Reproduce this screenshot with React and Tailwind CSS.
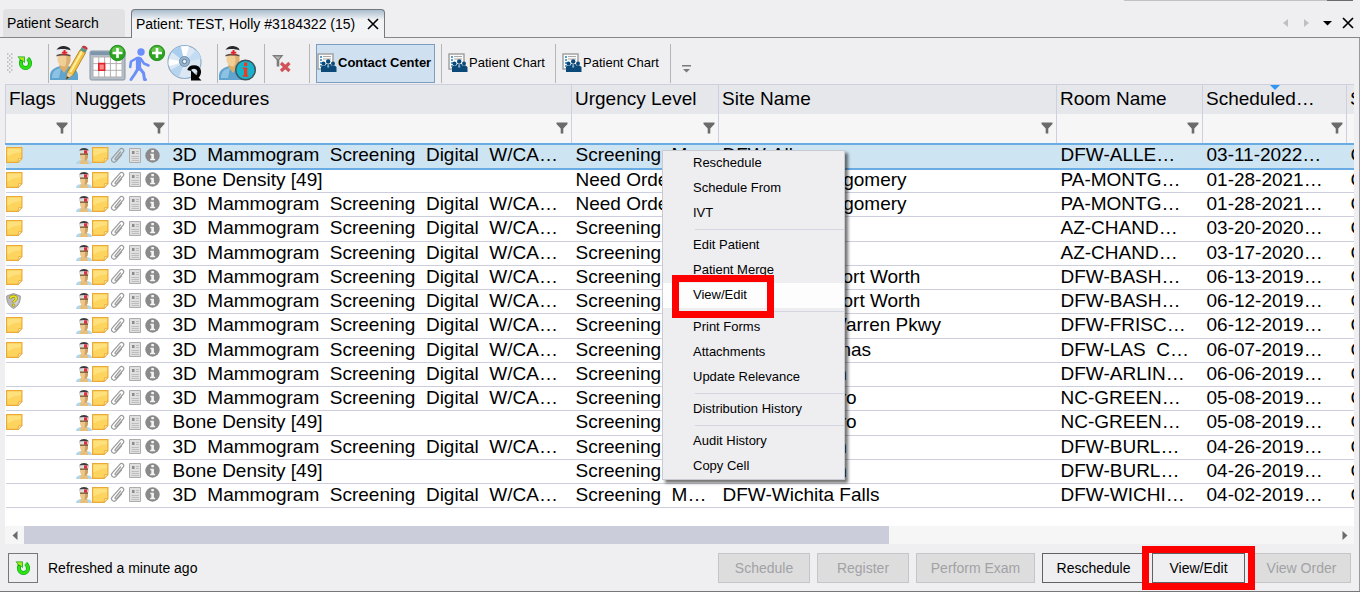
import { useState } from "react";

const PROC = "3D  Mammogram  Screening  Digital  W/CA…";
const BONE = "Bone Density [49]";
const SCREEN = "Screening  M…";

const rows = [
  { flag: "note", proc: PROC, urgency: SCREEN, site: "DFW-Allen", room: "DFW-ALLE…", date: "03-11-2022…" },
  { flag: "note", proc: BONE, urgency: "Need Order", site: "PA-West Montgomery", room: "PA-MONTG…", date: "01-28-2021…" },
  { flag: "note", proc: PROC, urgency: "Need Order", site: "PA-West Montgomery", room: "PA-MONTG…", date: "01-28-2021…" },
  { flag: "note", proc: PROC, urgency: SCREEN, site: "AZ-Chandler", room: "AZ-CHAND…", date: "03-20-2020…" },
  { flag: "note", proc: PROC, urgency: SCREEN, site: "AZ-Chandler", room: "AZ-CHAND…", date: "03-17-2020…" },
  { flag: "note", proc: PROC, urgency: SCREEN, site: "DFW-Basha Fort Worth", room: "DFW-BASH…", date: "06-13-2019…" },
  { flag: "shield", proc: PROC, urgency: SCREEN, site: "DFW-Basha Fort Worth", room: "DFW-BASH…", date: "06-12-2019…" },
  { flag: "note", proc: PROC, urgency: SCREEN, site: "DFW-Frisco Warren Pkwy", room: "DFW-FRISC…", date: "06-12-2019…" },
  { flag: "note", proc: PROC, urgency: SCREEN, site: "DFW-Las Colinas", room: "DFW-LAS  C…", date: "06-07-2019…" },
  { flag: null, proc: PROC, urgency: SCREEN, site: "DFW-Arlington", room: "DFW-ARLIN…", date: "06-06-2019…" },
  { flag: "note", proc: PROC, urgency: SCREEN, site: "NC-Greensboro", room: "NC-GREEN…", date: "05-08-2019…" },
  { flag: "note", proc: BONE, urgency: SCREEN, site: "NC-Greensboro", room: "NC-GREEN…", date: "05-08-2019…" },
  { flag: null, proc: PROC, urgency: SCREEN, site: "DFW-Burleson", room: "DFW-BURL…", date: "04-26-2019…" },
  { flag: null, proc: BONE, urgency: SCREEN, site: "DFW-Burleson", room: "DFW-BURL…", date: "04-26-2019…" },
  { flag: null, proc: PROC, urgency: SCREEN, site: "DFW-Wichita Falls", room: "DFW-WICHI…", date: "04-02-2019…" },
];

const columns = [
  { name: "Flags", width: "w-[66px]" },
  { name: "Nuggets", width: "w-[97px]" },
  { name: "Procedures", width: "w-[403px]" },
  { name: "Urgency Level", width: "w-[147px]" },
  { name: "Site Name", width: "w-[338px]" },
  { name: "Room Name", width: "w-[146px]" },
  { name: "Scheduled…", width: "w-[144px]", sorted: true },
  { name: "Status", width: "w-[140px]" },
];

const menuGroups = [
  ["Reschedule", "Schedule From", "IVT"],
  ["Edit Patient", "Patient Merge", "View/Edit"],
  ["Print Forms", "Attachments", "Update Relevance"],
  ["Distribution History"],
  ["Audit History", "Copy Cell"],
];

function RefreshIcon() {
  return (
    <svg width="17" height="16" viewBox="0 0 17 16">
      <path d="M4 6v2.500a4.500 4.500 0 0 0 9 0c0-2-.6-3.600-2.300-5" fill="none" stroke="#0a9f14" strokeWidth="4" />
      <path d="M.5 1.500h7.300V8L6 6.500H2.500V4z" fill="#0a9f14" />
      <path d="M4 6v2.500a4.500 4.500 0 0 0 9 0c0-2-.6-3.600-2.300-5" fill="none" stroke="#2ce312" strokeWidth="2.800" />
      <path d="M1.500 2.200h5.500v4.600L5.500 5.500 3.500 4.500z" fill="#a4ee1c" />
    </svg>
  );
}

function NursePerson() {
  return (
    <g>
      <path d="M0 34v-4c0-6 4-8 10-10h8c6 2 10 4 10 10v4z" fill="#5fa4cf" />
      <path d="M2 32c0-7 4-9 9-10l-2 10z" fill="#8cc3e4" />
      <path d="M9.500 16h9v5l-4.500 6-4.500-6z" fill="#dcae68" />
      <ellipse cx="14" cy="13" rx="6.600" ry="7.600" fill="#f0cf96" />
      <path d="M15 6c4 1 6 4 5.500 8-.5 4-2 6-5.500 6.500 2-4 2-9 0-14.500z" fill="#dcae70" />
      <path d="M6.500 4C8 1 12-.5 15 .2c4 .6 6 2.600 5.500 5.300z" fill="#28282c" />
      <path d="M6 4c4-1.500 10-1.500 15 .5v4.500c-5-2-11-2-15 0z" fill="#e9edf1" />
      <path d="M6.500 9c4-1.600 9-1.600 14 0v1.600c-4-1.400-10-1.400-14 0z" fill="#5d4d48" />
      <path d="M13.500 4h2v1.800h1.800v1.800h-1.800v1.600h-2V7.600h-1.600V5.800h1.600z" fill="#e3202a" />
    </g>
  );
}

function EditPatientIcon() {
  return (
    <svg width="38" height="36" viewBox="0 0 38 36">
      <g transform="translate(0 1)">
        <NursePerson />
      </g>
      <path d="M16 34.500l1.800-8L30 5l5.500 2.800L23 30z" fill="#f5c542" stroke="#a87516" strokeWidth=".8" />
      <path d="M20.500 27 32 6.500" stroke="#ffefa0" strokeWidth="2" />
      <path d="M16 34.500l1.600-7 5 2.600z" fill="#e9cfa0" />
      <path d="M16 34.500l.8-3.200 2.300 1.300z" fill="#33302c" />
      <path d="m30 5 1.600-2.700 5.400 2.700-1.500 2.800z" fill="#5c9580" />
      <path d="m31.600 2.300.9-1.400c1.700-.9 5.300.9 5.100 2.800l-.6 1.300z" fill="#c43444" />
    </svg>
  );
}

function PlusBadge({ x, y }) {
  return (
    <g transform={`translate(${x} ${y})`}>
      <circle r="7.700" fill="#2ba51d" stroke="#18831a" strokeWidth=".8" />
      <path d="M-6-2a6.300 6.300 0 0 1 12 0C2-.5-2-.5-6-2z" fill="#73cf58" opacity=".7" />
      <path d="M-1.300-5h2.600v3.700H5v2.600H1.300V5h-2.600V1.300H-5v-2.600h3.700z" fill="#fff" />
    </g>
  );
}

function CalendarAddIcon() {
  return (
    <svg width="38" height="38" viewBox="0 0 38 38">
      <rect x="1" y="7" width="35" height="29" rx="1.500" fill="#b4bec8" stroke="#8796a3" />
      <path d="M1.500 7.500h34v3.500h-34z" fill="#7d95ab" />
      <path d="M4 13h29v20H4z" fill="#fff" />
      <path d="M4 13h29v20H4zM9.800 13v20M15.600 13v20M21.400 13v20M27.200 13v20M4 19.600h29M4 26.300h29" fill="none" stroke="#b3afaf" />
      <path d="M9.800 19.600h5.800v6.700H9.800z" fill="#ff8c8c" stroke="#e3222b" strokeWidth="1.600" />
      <PlusBadge x={28.500} y={9} />
    </svg>
  );
}

function WalkAddIcon() {
  return (
    <svg width="38" height="38" viewBox="0 0 38 38">
      <circle cx="13" cy="8" r="3.700" fill="#6b8ff8" />
      <g fill="none" stroke="#6b8ff8" strokeLinecap="round" strokeLinejoin="round">
        <path d="M10.500 15v9" strokeWidth="5.200" />
        <path d="M9 14l-6 3.500-.8 5.500" strokeWidth="2.600" />
        <path d="M12.500 14.500l3.500 5 4.500 2" strokeWidth="2.600" />
        <path d="M9.800 25l-3 5L3 35.500" strokeWidth="3" />
        <path d="M11.500 24l4 5 1 6.500h1" strokeWidth="3" />
      </g>
      <PlusBadge x={29} y={9} />
    </svg>
  );
}

function DiscIcon() {
  return (
    <svg width="38" height="38" viewBox="0 0 38 38">
      <circle cx="17.500" cy="18" r="16.500" fill="#dbe8f4" stroke="#8faecb" strokeWidth="1.200" />
      <path d="M17.500 18 5 8a16 16 0 0 1 9-5.500z" fill="#a8cdee" />
      <path d="M17.500 18 14 2.500a16 16 0 0 1 8 0z" fill="#fff" />
      <path d="M17.500 18 29 6a16 16 0 0 1 5 9z" fill="#c3dcf3" />
      <path d="M17.500 18 4 26a16 16 0 0 0 8 7z" fill="#b7d4ef" />
      <path d="M17.500 18 2 15a16 16 0 0 0 0 7z" fill="#fff" />
      <circle cx="17.500" cy="17.500" r="5" fill="#9ab5cc" stroke="#6d90af" />
      <circle cx="17.500" cy="17.500" r="2.200" fill="#e8f0f7" stroke="#55799b" />
      <path d="M22 26.500c1-4.500 9-5 10.200.5.500 2.500-.8 4.500-2.700 6.500" fill="none" stroke="#050505" strokeWidth="3.600" />
      <path d="M24 26v10.500h10.500z" fill="#050505" />
    </svg>
  );
}

function PatientInfoIcon() {
  return (
    <svg width="38" height="36" viewBox="0 0 38 36">
      <g transform="translate(0 1)">
        <NursePerson />
      </g>
      <circle cx="26.500" cy="25" r="9.800" fill="#16b3cb" stroke="#3c5660" strokeWidth="1.500" />
      <path d="M25 17.500h3.200V21H25zM23.800 22.500h4.400v7.800h1.200v1.500h-5.600v-1.500H25V24h-1.200z" fill="#f0391d" />
    </svg>
  );
}

function ClearFilterIcon() {
  return (
    <svg width="20" height="20" viewBox="0 0 20 20">
      <path d="M1 2h11.500L8.300 7v6.500H5.700V7z" fill="#7b7b7b" />
      <path d="M3.500 3.500h6l-2.300 3z" fill="#b9b9b9" />
      <path d="m10 10 8.500 8M18.500 10 10 18" stroke="#cf5358" strokeWidth="3.200" />
    </svg>
  );
}

function ChartIcon() {
  return (
    <svg width="20" height="20" viewBox="0 0 20 20">
      <path d="M1 1h15v15H1z" fill="#fbfbfb" stroke="#a3a3a3" strokeWidth="1.500" />
      <path d="M3 4h2M3 7h2M3 10h2M3 13h2" stroke="#2781b5" strokeWidth="1.500" />
      <path d="M6 3.500h8M6 6h8" stroke="#a8a8a8" />
      <g fill="#0b4a78">
        <circle cx="6.500" cy="10.500" r="2" />
        <circle cx="16" cy="10.500" r="2" />
        <circle cx="11.200" cy="8.500" r="2.200" />
        <path d="M4 19v-5l1.500-1.500h2.700l1-1.500h4.200l1 1.500h3.200L19.500 14v5z" />
      </g>
      <path d="M10.600 11h1.200l.6 3-1.200 1-1.200-1z" fill="#7ca9c8" />
    </svg>
  );
}

function FunnelIcon() {
  return (
    <svg width="12" height="12" viewBox="0 0 12 12">
      <path d="M.5.500h11v1.600L7.300 6.500v5H4.700v-5L.5 2.100z" fill="#6b6b6b" />
    </svg>
  );
}

function NoteIcon() {
  return (
    <svg width="17" height="16" viewBox="0 0 17 16">
      <path d="M.6.600h15.300v11L12 15.400H.6z" fill="#fcd45e" stroke="#eba93a" strokeWidth="1.200" />
      <path d="M1.300 1.600h13.800v4c-6-1-10 2-13.800 4z" fill="#fee07c" />
      <path d="M15.900 11.600 12 15.400l.6-3.800z" fill="#fff3bd" stroke="#e9a637" strokeWidth=".8" />
    </svg>
  );
}

function ShieldIcon() {
  return (
    <svg width="15" height="16" viewBox="0 0 15 16">
      <path d="M7.500.500 14.300 3c.2 6-2 10-6.800 12.500C2.700 13 .5 9 .7 3z" fill="#b9b9b9" stroke="#9a9a9a" />
      <path d="M7.500 2 13 4c0 5-1.500 8-5.500 10z" fill="#cfcfcf" />
      <path d="M4.500 5.500c.3-3 5.800-3 5.800 0 0 2-2.600 2-2.600 4" fill="none" stroke="#77741a" strokeWidth="2.800" />
      <path d="M4.500 5.500c.3-3 5.800-3 5.800 0 0 2-2.600 2-2.600 4" fill="none" stroke="#e8e01e" strokeWidth="1.900" />
      <circle cx="7.600" cy="12.200" r="1.300" fill="#e8e01e" stroke="#77741a" strokeWidth=".5" />
    </svg>
  );
}

function NuggetIcons() {
  return (
    <div className="flex items-center">
      <svg width="16" height="17" viewBox="0 0 16 17">
        <path d="M0 17c0-2.600 2-3.600 5-4h6c3 .4 5 1.400 5 4z" fill="#b4d6ea" />
        <path d="M3.500 17l2-5h5l2 5z" fill="#e7bf7c" />
        <path d="M4 6h8v3c0 3-2 5-4 5s-4-2-4-5z" fill="#ecc78b" />
        <path d="M9.500 6H12v3c0 3-1.500 4.500-3.500 5z" fill="#cf9f62" />
        <path d="M3.500 3C5 .3 11 .3 12.500 3v2h-9z" fill="#3b3b3d" />
        <path d="M3 3.600c3-.8 7-.8 10 0v2.800c-3-1-7-1-10 0z" fill="#dcdcde" />
        <path d="M8 3.300h3.200v3.400H8z" fill="#dd3038" />
        <path d="M4 6.600h8v1.200H4z" fill="#6d5541" />
      </svg>
      <NoteIcon />
      <svg width="17" height="17" viewBox="0 0 17 17" fill="none" stroke="#9a9a9a" strokeWidth="1.200" strokeLinecap="round">
        <path d="M11.500 5 6.300 11.300c-.9 1.200.5 2.300 1.500 1.200l6.300-7.400c2-2.600-1.200-4.900-3.300-2.700L3.300 10.800c-2.300 3 1.300 6 3.900 3.300L12.500 8" />
      </svg>
      <svg width="18" height="17" viewBox="0 0 18 17">
        <path d="M3.500 1.500h11v14h-11z" fill="#e0e0e0" stroke="#adadad" />
        <path d="M6 4h2.500v3H6z" fill="#8c8c8c" />
        <path d="M10 4.500h3M10 6.500h3M5.500 9.500h7.500M5.500 11.500h7.500M5.500 13.500h7.500" stroke="#bdbdbd" />
      </svg>
      <svg width="17" height="17" viewBox="0 0 17 17">
        <circle cx="8.500" cy="8.500" r="7.200" fill="#8a8a8a" />
        <path d="M7.300 3h2.600v2.300H7.300zM6.300 6.700h3.600v5h1.200v1.600H6.100v-1.600h1.200V8.300h-1z" fill="#f4f4f4" />
      </svg>
    </div>
  );
}

function ToolbarButton({ label, children }) {
  return (
    <button type="button" aria-label={label} className="flex h-10 items-center">
      {children}
    </button>
  );
}

function Divider() {
  return <div className="h-[39px] w-px shrink-0 bg-[#b4b5b9]" />;
}

function ContextMenu() {
  return (
    <div
      role="menu"
      className="absolute top-[66px] left-[657px] w-[183px] border border-[#c9cad2] bg-[#eeeef1] text-[13px] shadow-[3px_3px_3px_rgba(0,0,0,0.55)]"
    >
      {menuGroups.map((group, i) => (
        <div key={i}>
          {i > 0 && (
            <div className="flex h-[7px] items-center pl-8">
              <div className="h-px w-full bg-[#d5d6e2]" />
            </div>
          )}
          {group.map((item) => (
            <div key={item} className={item === "View/Edit" ? "relative bg-[#fdfdfd]" : ""}>
              <button type="button" role="menuitem" className="block h-[25px] w-full pl-[30px] text-left">
                {item}
              </button>
              {item === "View/Edit" && (
                <div className="pointer-events-none absolute -top-2 left-[9px] h-[43px] w-[102px] border-[7px] border-[#ff0000]" />
              )}
            </div>
          ))}
        </div>
      ))}
    </div>
  );
}

function StudyTable({ selected, onSelect }) {
  return (
    <table className="w-[1481px] table-fixed border-collapse text-[19px] leading-5">
      <colgroup>
        {columns.map((c) => (
          <col key={c.name} className={c.width} />
        ))}
      </colgroup>
      <thead>
        <tr className="h-[29px] border-t border-[#cfd0df] bg-[#e6e7eb]">
          {columns.map((c) => (
            <th key={c.name} scope="col" className="relative border-x border-[#cfd0df] pr-1 pl-[3px] text-left font-normal whitespace-nowrap">
              {c.name}
              {c.sorted && (
                <svg className="absolute top-0 left-[67px]" width="10" height="5" viewBox="0 0 10 5">
                  <path d="M0 0h10L5 5z" fill="#2f96f3" />
                </svg>
              )}
            </th>
          ))}
        </tr>
        <tr className="h-[30px] border-b-2 border-[#69abe3] bg-[#f6f6f6]">
          {columns.map((c) => (
            <td key={c.name} className="border-x border-x-[#cfd0df] pr-[3px]">
              <button type="button" aria-label={`Filter ${c.name}`} className="ml-auto block">
                <FunnelIcon />
              </button>
            </td>
          ))}
        </tr>
      </thead>
      <tbody className="[&_td]:pt-0 [&_td]:pr-0 [&_td]:pb-[2px]">
        {rows.map((row, i) => (
          <tr
            key={i}
            onClick={() => onSelect(i)}
            className={
              i === selected
                ? "h-[25px] border-b-2 border-[#69abe3] bg-[#cde4f2] whitespace-pre"
                : "h-6 border-b border-[#cccddd] bg-white whitespace-pre nth-[4n]:h-[25px]"
            }
          >
            <td className="pl-0">
              {row.flag === "note" && <NoteIcon />}
              {row.flag === "shield" && <ShieldIcon />}
            </td>
            <td className="pl-1">
              <NuggetIcons />
            </td>
            <td className="pl-1">{row.proc}</td>
            <td className="overflow-hidden pl-1">{row.urgency}</td>
            <td className="pl-1">{row.site}</td>
            <td className="pl-1">{row.room}</td>
            <td className="pl-1">{row.date}</td>
            <td className="pl-1">Completed</td>
          </tr>
        ))}
      </tbody>
    </table>
  );
}

function ActionButton({ children, disabled, className = "w-[92px]" }) {
  return (
    <button
      type="button"
      disabled={disabled}
      className={`h-[30px] border border-[#606065] bg-[#efeff1] disabled:border-[#c5c5c7] disabled:bg-[#dddddd] disabled:text-[#a2a2a5] ${className}`}
    >
      {children}
    </button>
  );
}

export default function App() {
  const [selected, setSelected] = useState(0);

  return (
    <div className="flex min-h-screen flex-col overflow-hidden border-b border-[#77777b] bg-[#efeff1] font-['Liberation_Sans',Arial,sans-serif] text-sm text-black">
      {/* Sliver of the window frame above the tabs */}
      <div className="flex h-px justify-end pr-[7px]">
        <div className="w-[203px] bg-[#c2c2c4]" />
        <div className="w-[26px] bg-[#6c6c70]" />
      </div>

      <div className="flex h-[37px] items-end">
        <div className="flex h-full items-end border-b border-[#85868b] pr-[6px] pl-[3px]">
          <button type="button" className="h-7 w-[122px] rounded-t bg-[#e1e1e3] pl-1 text-left">
            Patient Search
          </button>
        </div>
        <div className="z-10 flex h-[29px] w-[254px] items-center justify-between rounded-t border border-b-0 border-[#77787e] bg-linear-to-b from-[#a9bdcd] from-0% to-[#f2f3f5] to-35% pr-[5px] pl-1">
          <button type="button" className="whitespace-nowrap">
            Patient: TEST, Holly #3184322 (15)
          </button>
          <button type="button" aria-label="Close tab">
            <svg width="12" height="12" viewBox="0 0 12 12" stroke="#000" strokeWidth="1.600">
              <path d="m1 1 10 10M11 1 1 11" />
            </svg>
          </button>
        </div>
        <div className="flex h-full flex-1 items-center justify-end gap-[14px] border-b border-[#85868b] pt-2 pr-[6px]">
          <button type="button" aria-label="Previous tab">
            <svg width="6" height="8" viewBox="0 0 6 8">
              <path d="M5 0v8L0 4z" fill="#bfc0c3" />
            </svg>
          </button>
          <button type="button" aria-label="Next tab">
            <svg width="6" height="8" viewBox="0 0 6 8">
              <path d="M1 0v8l5-4z" fill="#bfc0c3" />
            </svg>
          </button>
          <div className="flex items-center gap-[10px]">
            <button type="button" aria-label="Tab list">
              <svg width="9" height="6" viewBox="0 0 9 6">
                <path d="M0 1h9L4.500 5.500z" fill="#000" />
              </svg>
            </button>
            <button type="button" aria-label="Close">
              <svg width="12" height="12" viewBox="0 0 12 12" stroke="#000" strokeWidth="1.700">
                <path d="m1 1 10 10M11 1 1 11" />
              </svg>
            </button>
          </div>
        </div>
      </div>

      <div className="flex flex-1 flex-col border-r border-[#98999e]">
        <div className="flex h-[46px] items-center overflow-hidden pt-1 pl-[7px] text-[13px]">
          <svg className="shrink-0" width="7" height="20" viewBox="0 0 7 20">
            {[0, 4, 8, 12, 16].map((y) => (
              <path key={y} d={`M0 ${y + 1}h1.500M4 ${y + 1}h1.500M2 ${y + 3}h1.500`} stroke="#b8b8bb" strokeWidth="1.500" />
            ))}
          </svg>
          <div className="mr-[14px] ml-[3px]">
            <ToolbarButton label="Refresh">
              <RefreshIcon />
            </ToolbarButton>
          </div>
          <Divider />
          <div className="mx-px flex gap-px pr-[11px]">
            <ToolbarButton label="Edit patient">
              <EditPatientIcon />
            </ToolbarButton>
            <ToolbarButton label="Add appointment">
              <CalendarAddIcon />
            </ToolbarButton>
            <ToolbarButton label="Add walk-in">
              <WalkAddIcon />
            </ToolbarButton>
            <ToolbarButton label="Import disc">
              <DiscIcon />
            </ToolbarButton>
          </div>
          <Divider />
          <div className="mr-[7px] ml-px">
            <ToolbarButton label="Patient information">
              <PatientInfoIcon />
            </ToolbarButton>
          </div>
          <Divider />
          <div className="mr-[18px] ml-[6px]">
            <ToolbarButton label="Clear filters">
              <ClearFilterIcon />
            </ToolbarButton>
          </div>
          <Divider />
          <button type="button" className="mx-[6px] flex h-[39px] w-[119px] shrink-0 items-center gap-px border border-[#7d9dbf] bg-[#cfe0f1] font-bold whitespace-nowrap">
            <ChartIcon />
            Contact Center
          </button>
          <Divider />
          <button type="button" className="flex h-[39px] w-[113px] shrink-0 items-center gap-px pl-[6px] whitespace-nowrap">
            <ChartIcon />
            Patient Chart
          </button>
          <Divider />
          <button type="button" className="flex h-[39px] w-[114px] shrink-0 items-center gap-px pl-[6px] whitespace-nowrap">
            <ChartIcon />
            Patient Chart
          </button>
          <Divider />
          <button type="button" aria-label="Toolbar options" className="mt-3 ml-[11px]">
            <svg width="9" height="8" viewBox="0 0 9 8">
              <path d="M0 0h9v1.500H0zM1 4h7L4.500 7.500z" fill="#7b7b7e" />
            </svg>
          </button>
        </div>

        <div className="relative mr-[5px] ml-[5px] flex flex-1 flex-col bg-white">
          <div className="flex-1 overflow-hidden">
            <StudyTable selected={selected} onSelect={setSelected} />
          </div>
          <div className="flex h-[18px] items-center bg-[#f6f6f6]">
            <button type="button" aria-label="Scroll left" className="flex w-[19px] justify-center">
              <svg width="6" height="9" viewBox="0 0 6 9">
                <path d="M5.500 0v9L.5 4.500z" fill="#6b6b6e" />
              </svg>
            </button>
            <div className="flex-1">
              <div className="h-[18px] w-[66%] bg-[#cccddb]" />
            </div>
            <button type="button" aria-label="Scroll right" className="flex w-[19px] justify-center">
              <svg width="6" height="9" viewBox="0 0 6 9">
                <path d="M.5 0v9l5-4.500z" fill="#6b6b6e" />
              </svg>
            </button>
          </div>
          <ContextMenu />
        </div>

        <div className="flex h-[47px] items-center pr-2 pl-2">
          <button type="button" aria-label="Refresh list" className="flex size-[30px] items-center justify-center border border-[#77777b]">
            <RefreshIcon />
          </button>
          <span className="ml-[10px]">Refreshed a minute ago</span>
          <div className="ml-auto flex gap-[7px]">
            <ActionButton disabled>Schedule</ActionButton>
            <ActionButton disabled>Register</ActionButton>
            <ActionButton disabled className="w-[119px]">
              Perform Exam
            </ActionButton>
            <ActionButton className="w-[103px]">Reschedule</ActionButton>
            <div className="relative">
              <ActionButton className="w-[93px]">View/Edit</ActionButton>
              <div className="pointer-events-none absolute -top-[7px] -left-[10px] z-10 h-11 w-[113px] border-[7px] border-[#ff0000]" />
            </div>
            <ActionButton disabled className="w-[99px]">
              View Order
            </ActionButton>
          </div>
        </div>
      </div>
    </div>
  );
}
